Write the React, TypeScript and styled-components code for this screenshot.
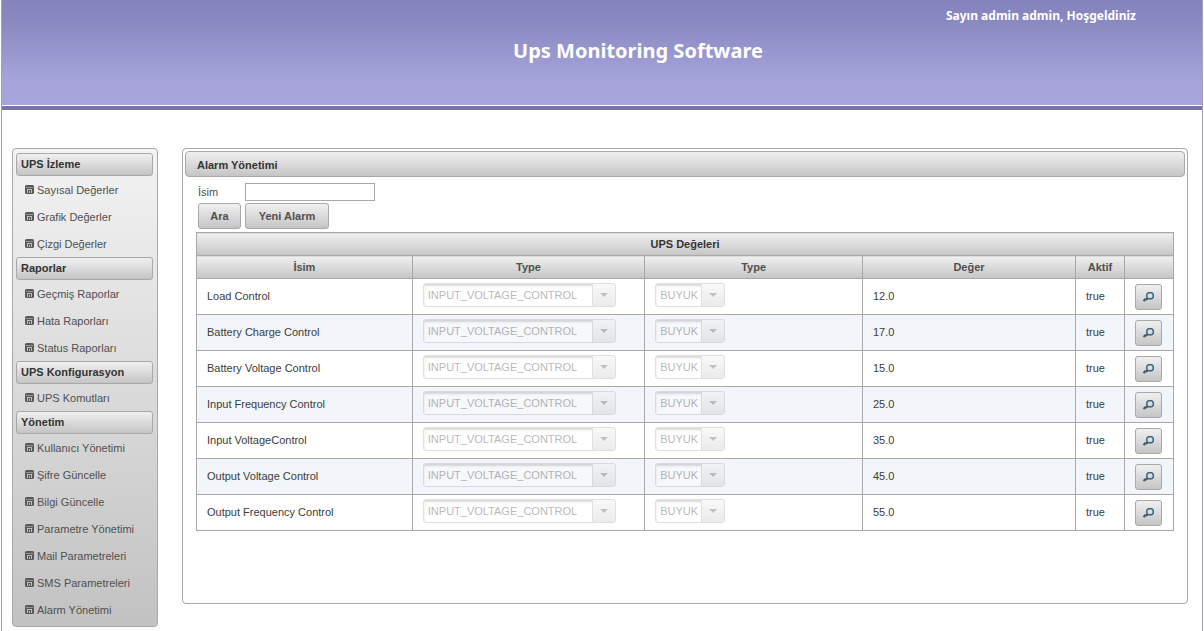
import React from "react";
import styled, { createGlobalStyle } from "styled-components";

const line = "#a8a8a8";
const chrome = "linear-gradient(#f0f0f0, #c5c5c5)";

const GlobalStyle = createGlobalStyle`
  * { box-sizing: border-box; }
  body {
    margin: 0;
    background: #fff;
    color: #4f4f4f;
    font: 11px/14px "Liberation Sans", Arial, sans-serif;
  }
  button, input, select { font: inherit; color: inherit; }
`;

const Page = styled.div`
  margin: 0 1px;
  min-height: 100vh;
  border: solid #a0a0b8;
  border-width: 0 1px;
`;

const Header = styled.header`
  display: flex;
  flex-direction: column;
  height: 110px;
  background: linear-gradient(#8583bb, #8a88c0 20px, #a4a3da 80px, #a8a5dc 105px);
  border-bottom: 4px solid #7674a8;
  box-shadow: inset 0 -1px #fff;
  color: #fff;
  font-family: "Noto Sans", Tahoma, sans-serif;
  font-weight: bold;
`;

const Welcome = styled.p`
  margin: 8px 66px 0 0;
  text-align: right;
  font-size: 12px;
  line-height: 16px;
`;

const Title = styled.h1`
  margin: 14px 0 0;
  padding-left: 72px;
  text-align: center;
  font-size: 20px;
  line-height: 26px;
`;

const Content = styled.div`
  display: flex;
  align-items: flex-start;
  gap: 24px;
  padding: 38px 14px 3px 10px;
`;

const Sidebar = styled.nav`
  flex: none;
  width: 146px;
  padding: 4px 4px 3px 3px;
  border: 1px solid ${line};
  border-radius: 4px;
  background: linear-gradient(#f3f3f3, #c2c2c2);
`;

const MenuHeading = styled.h2`
  margin: 0;
  padding: 0 4px;
  border: 1px solid ${line};
  border-radius: 3px;
  background: ${chrome};
  color: #333;
  font-size: 11px;
  line-height: 21px;
`;

const MenuList = styled.ul`
  margin: 0;
  padding: 0 9px;
  list-style: none;
`;

const MenuLink = styled.a`
  display: flex;
  align-items: center;
  gap: 3px;
  height: 27px;
  color: inherit;
  text-decoration: none;
  white-space: nowrap;
`;

const Panel = styled.main`
  flex: 1;
  min-width: 0;
  min-height: 456px;
  padding: 2px;
  border: 1px solid ${line};
  border-radius: 4px;
`;

const PanelTitle = styled.h2`
  margin: 0;
  padding: 2px 11px 0;
  border: 1px solid ${line};
  border-radius: 4px;
  background: ${chrome};
  color: #333;
  font-size: 11px;
  line-height: 22px;
`;

const PanelBody = styled.div`
  padding: 6px 11px;
`;

const SearchForm = styled.form`
  display: grid;
  grid-template-columns: 43px 1fr;
  gap: 2px 4px;
  align-items: center;
  padding: 0 2px;
  margin-bottom: 3px;
`;

const NameInput = styled.input`
  width: 130px;
  height: 18px;
  padding: 0 3px;
  border: 1px solid ${line};
  background: #fff;
`;

const Button = styled.button<{ $width: number }>`
  display: flex;
  align-items: center;
  justify-content: center;
  width: ${(p) => p.$width}px;
  height: 26px;
  padding: 0;
  border: 1px solid ${line};
  border-radius: 3px;
  background: ${chrome};
  font-weight: bold;
`;

const Table = styled.table`
  width: 100%;
  border-collapse: collapse;
  table-layout: fixed;
  color: #3c3c3c;
`;

const HeadCell = styled.th<{ $caption?: boolean }>`
  height: 23px;
  padding: 0;
  border: 1px solid ${line};
  background: ${chrome};
  color: ${(p) => (p.$caption ? "#333" : "#4f4f4f")};
`;

const Row = styled.tr`
  &:nth-child(even) { background: #f2f5f9; }
`;

const Cell = styled.td<{ $action?: boolean }>`
  height: 36px;
  padding: ${(p) => (p.$action ? "0 10px" : "0 10px 2px")};
  border: 1px solid ${line};
`;

const SelectBox = styled.div<{ $width: number }>`
  display: grid;
  grid-template-columns: 1fr 23px;
  width: ${(p) => p.$width}px;
  height: 24px;
  margin-bottom: 2px;
  border: 1px solid ${line};
  border-radius: 3px;
  overflow: hidden;
  background: #fff;
  opacity: 0.35;
`;

const Select = styled.select`
  grid-area: 1 / 1 / 2 / 3;
  appearance: none;
  min-width: 0;
  margin: 0;
  padding: 0 24px 0 4px;
  border: 0;
  background: none;
  box-shadow: inset 0 2px 2px #999;
  color: #333;
  opacity: 1;
`;

const Arrow = styled.span`
  grid-area: 1 / 2;
  z-index: 1;
  display: flex;
  align-items: center;
  justify-content: center;
  border-left: 1px solid ${line};
  background: ${chrome};
  pointer-events: none;
  &::before {
    content: "";
    border: 4px solid transparent;
    border-top-color: #38566f;
    border-bottom: 0;
  }
`;

const DiskIcon = () => (
  <svg width="9" height="9" viewBox="0 0 9 9" aria-hidden="true">
    <rect width="9" height="9" rx="1.5" fill="#5a5858" />
    <path fill="#d0d0d0" d="M1 2h7v1H1z" opacity="0.5" />
    <path fill="#d8d8d8" d="M2 4h5v4H6V5H3v3H2zM4 6h1v2H4z" opacity="0.8" />
  </svg>
);

const SearchIcon = () => (
  <svg width="11" height="10" viewBox="0 0 11 10" aria-hidden="true">
    <path fill="none" stroke="#38667f" strokeWidth="1.5" d="M5.2.8h3.6l1.4 1.4v3.2L8.8 6.8H5.2L3.9 5.4V2.2z" />
    <path stroke="#38566f" strokeWidth="2" d="M4.6 6.2L3.2 7.6H1.8L.6 9.2" fill="none" />
  </svg>
);

const menu = [
  { title: "UPS İzleme", items: ["Sayısal Değerler", "Grafik Değerler", "Çizgi Değerler"] },
  { title: "Raporlar", items: ["Geçmiş Raporlar", "Hata Raporları", "Status Raporları"] },
  { title: "UPS Konfigurasyon", items: ["UPS Komutları"] },
  {
    title: "Yönetim",
    items: [
      "Kullanıcı Yönetimi",
      "Şifre Güncelle",
      "Bilgi Güncelle",
      "Parametre Yönetimi",
      "Mail Parametreleri",
      "SMS Parametreleri",
      "Alarm Yönetimi",
    ],
  },
];

const alarms = [
  ["Load Control", "12.0"],
  ["Battery Charge Control", "17.0"],
  ["Battery Voltage Control", "15.0"],
  ["Input Frequency Control", "25.0"],
  ["Input VoltageControl", "35.0"],
  ["Output Voltage Control", "45.0"],
  ["Output Frequency Control", "55.0"],
];

const columns = [
  { label: "İsim", width: "22.1%" },
  { label: "Type", width: "23.8%" },
  { label: "Type", width: "22.3%" },
  { label: "Değer", width: "21.8%" },
  { label: "Aktif", width: "49px" },
  { label: "", width: "49px" },
];

function DisabledSelect({ value, label, width }: { value: string; label: string; width: number }) {
  return (
    <SelectBox $width={width}>
      <Select disabled aria-label={label} defaultValue={value}>
        <option>{value}</option>
      </Select>
      <Arrow />
    </SelectBox>
  );
}

export default function App() {
  return (
    <Page>
      <GlobalStyle />
      <Header>
        <Welcome>Sayın admin admin, Hoşgeldiniz</Welcome>
        <Title>Ups Monitoring Software</Title>
      </Header>
      <Content>
        <Sidebar>
          {menu.map((section) => (
            <section key={section.title}>
              <MenuHeading>{section.title}</MenuHeading>
              <MenuList>
                {section.items.map((item) => (
                  <li key={item}>
                    <MenuLink href="#">
                      <DiskIcon />
                      {item}
                    </MenuLink>
                  </li>
                ))}
              </MenuList>
            </section>
          ))}
        </Sidebar>
        <Panel>
          <PanelTitle>Alarm Yönetimi</PanelTitle>
          <PanelBody>
            <SearchForm onSubmit={(e) => e.preventDefault()}>
              <label htmlFor="name">İsim</label>
              <NameInput id="name" type="text" />
              <Button $width={43} type="submit">Ara</Button>
              <Button $width={84} type="button">Yeni Alarm</Button>
            </SearchForm>
            <Table>
              <colgroup>
                {columns.map((c, i) => (
                  <col key={i} width={c.width} />
                ))}
              </colgroup>
              <thead>
                <tr>
                  <HeadCell $caption colSpan={6}>UPS Değeleri</HeadCell>
                </tr>
                <tr>
                  {columns.map((c, i) => (
                    <HeadCell key={i}>{c.label}</HeadCell>
                  ))}
                </tr>
              </thead>
              <tbody>
                {alarms.map(([name, value]) => (
                  <Row key={name}>
                    <Cell>{name}</Cell>
                    <Cell>
                      <DisabledSelect value="INPUT_VOLTAGE_CONTROL" label={`${name} type`} width={193} />
                    </Cell>
                    <Cell>
                      <DisabledSelect value="BUYUK" label={`${name} comparison`} width={70} />
                    </Cell>
                    <Cell>{value}</Cell>
                    <Cell>true</Cell>
                    <Cell $action>
                      <Button $width={27} type="button" aria-label={`${name} detail`}>
                        <SearchIcon />
                      </Button>
                    </Cell>
                  </Row>
                ))}
              </tbody>
            </Table>
          </PanelBody>
        </Panel>
      </Content>
    </Page>
  );
}
